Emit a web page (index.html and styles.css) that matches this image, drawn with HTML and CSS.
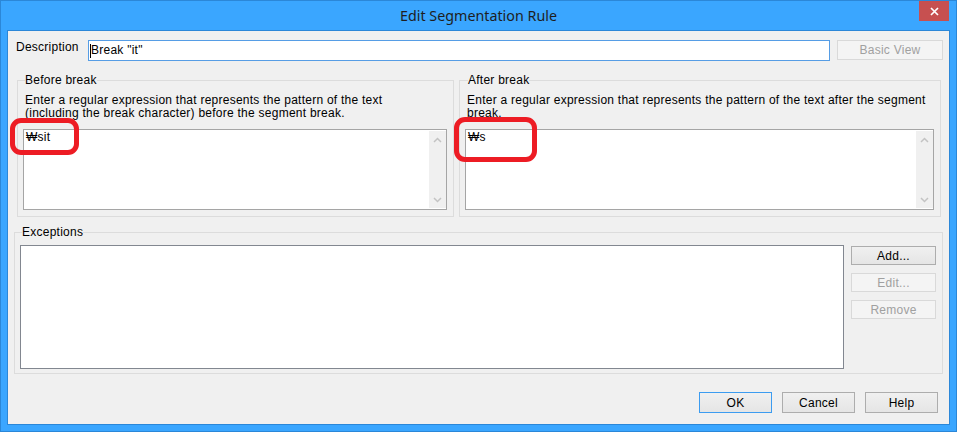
FILE: index.html
```html
<!DOCTYPE html>
<html>
<head>
<meta charset="utf-8">
<link rel="stylesheet" href="styles.css">
</head>
<body>
<div class="window">
  <div class="titlebar">
    <span class="tb-spacer"></span>
    <div class="title">Edit Segmentation Rule</div>
    <button class="close" type="button"><svg width="9" height="9" viewBox="0 0 9 9"><path d="M1 1 L8 8 M8 1 L1 8" stroke="#fff" stroke-width="1.7" fill="none"/></svg></button>
  </div>
  <div class="client">
    <div class="row-desc">
      <label class="lbl">Description</label>
      <div class="input"><span class="caret"></span>Break "it"</div>
      <button class="btn disabled basic" type="button">Basic View</button>
    </div>
    <div class="row-groups">
      <fieldset class="group g1">
        <legend>Before break</legend>
        <p class="hint">Enter a regular expression that represents the pattern of the text<br>(including the break character) before the segment break.</p>
        <div class="editbox">
          <div class="edittext">₩sit</div>
          <div class="vscroll">
            <span class="arrow"><svg width="9" height="6" viewBox="0 0 9 6"><polyline points="1,5 4.5,1.5 8,5" fill="none" stroke="#c3c3c3" stroke-width="1.5"/></svg></span>
            <span class="arrow"><svg width="9" height="6" viewBox="0 0 9 6"><polyline points="1,1 4.5,4.5 8,1" fill="none" stroke="#c3c3c3" stroke-width="1.5"/></svg></span>
          </div>
        </div>
      </fieldset>
      <fieldset class="group g2">
        <legend>After break</legend>
        <p class="hint">Enter a regular expression that represents the pattern of the text after the segment<br>break.</p>
        <div class="editbox">
          <div class="edittext">₩s</div>
          <div class="vscroll">
            <span class="arrow"><svg width="9" height="6" viewBox="0 0 9 6"><polyline points="1,5 4.5,1.5 8,5" fill="none" stroke="#c3c3c3" stroke-width="1.5"/></svg></span>
            <span class="arrow"><svg width="9" height="6" viewBox="0 0 9 6"><polyline points="1,1 4.5,4.5 8,1" fill="none" stroke="#c3c3c3" stroke-width="1.5"/></svg></span>
          </div>
        </div>
      </fieldset>
    </div>
    <fieldset class="group exceptions">
      <legend>Exceptions</legend>
      <div class="exc-body">
        <div class="listbox"></div>
        <div class="exc-buttons">
          <button class="btn side" type="button">Add...</button>
          <button class="btn side disabled" type="button">Edit...</button>
          <button class="btn side disabled" type="button">Remove</button>
        </div>
      </div>
    </fieldset>
    <div class="footer">
      <button class="btn foot default" type="button">OK</button>
      <button class="btn foot" type="button">Cancel</button>
      <button class="btn foot" type="button">Help</button>
    </div>
  </div>
  <div class="mark mark-before"></div>
  <div class="mark mark-after"></div>
</div>
</body>
</html>
```
FILE: styles.css
```css
* { box-sizing: border-box; }
html, body { margin: 0; padding: 0; background: #3aa6ff; }
body {
  font-family: "Liberation Sans", Arial, sans-serif;
  font-size: 12px;
  letter-spacing: 0.25px;
  color: #000;
}
.window {
  position: relative;
  width: 957px;
  height: 432px;
  background: #3aa6ff;
  border: 1px solid #2b87d8;
  display: flex;
  flex-direction: column;
}
.titlebar {
  height: 29px;
  display: grid;
  grid-template-columns: 1fr auto 1fr;
  padding-right: 7px;
}
.title {
  font-family: "Noto Sans", "Open Sans", sans-serif;
  font-size: 14.3px;
  letter-spacing: 0;
  color: #1e1e1e;
  line-height: 29px;
  padding-left: 7px;
}
.close {
  justify-self: end;
  align-self: start;
  width: 30px;
  height: 20px;
  border: 0;
  padding: 0;
  margin: 0;
  background: #c75050;
  display: flex;
  align-items: center;
  justify-content: center;
}
.client {
  margin: 0 6px 6px;
  border: 1px solid #2b87d8;
  background: #f0f0f0;
  height: 395px;
  display: flex;
  flex-direction: column;
}
.row-desc {
  display: flex;
  align-items: flex-start;
  margin: 9px 0 0 8px;
  height: 21px;
}
.lbl {
  width: 72px;
  line-height: 15px;
}
.input {
  width: 742px;
  height: 21px;
  border: 1px solid #569de5;
  background: #fff;
  line-height: 17px;
  padding-left: 1px;
  display: flex;
  align-items: center;
}
.caret {
  width: 1px;
  height: 14px;
  background: #000;
}
.btn {
  font-family: "Liberation Sans", Arial, sans-serif;
  font-size: 12px;
  letter-spacing: 0.25px;
  color: #000;
  border: 1px solid #adadad;
  background: linear-gradient(#f0f0f0, #e5e5e5);
  padding: 0;
  margin: 0;
  line-height: 1;
}
.btn.disabled {
  color: #a0a0a0;
  border-color: #d9d9d9;
  background: #f4f4f4;
}
.basic {
  width: 106px;
  height: 20px;
  margin-left: 7px;
}
.row-groups {
  display: flex;
  gap: 5px;
  margin: 12px 0 0 9px;
}
.group {
  margin: 0;
  border: 1px solid #dcdcdc;
  padding: 7px 6px 6px 5px;
  min-width: 0;
}
.group legend {
  padding: 0;
  margin-left: 2px;
  line-height: 14px;
}
.g1 { width: 437px; }
.g2 { width: 482px; }
.g2 legend { margin-left: 3px; }
.hint {
  margin: 0 0 0 2px;
  line-height: 13.4px;
  white-space: nowrap;
}
.editbox {
  margin-top: 8.2px;
  height: 81px;
  border: 1px solid #a5a5a5;
  background: #fff;
  display: flex;
  padding: 1px 0;
}
.edittext {
  flex: 1;
  padding: 0 0 0 2px;
  line-height: 13px;
  font-family: "Liberation Sans", "DejaVu Sans", sans-serif;
}
.vscroll {
  width: 17px;
  background: #f0f0f0;
  display: flex;
  flex-direction: column;
  justify-content: space-between;
}
.arrow {
  height: 17px;
  display: flex;
  align-items: center;
  justify-content: center;
}
.exceptions {
  width: 929px;
  margin: 8px 0 0 6px;
  padding: 6px 6px 4px 5px;
}
.exceptions legend { margin-left: 2px; }
.exc-body {
  display: flex;
  gap: 7px;
}
.listbox {
  width: 824px;
  height: 124px;
  border: 1px solid #828790;
  background: #fff;
}
.exc-buttons {
  display: flex;
  flex-direction: column;
  gap: 8px;
  padding-top: 1px;
}
.side {
  width: 85px;
  height: 19px;
}
.footer {
  display: flex;
  justify-content: flex-end;
  gap: 10px;
  margin-top: 18px;
  padding-right: 11px;
}
.foot {
  width: 73px;
  height: 21px;
}
.foot.default {
  border-color: #3c9cf0;
}
.mark {
  position: absolute;
  border: 5px solid #ed1c24;
  border-radius: 11px;
  pointer-events: none;
}
.mark-before {
  left: 9px;
  top: 117px;
  width: 69px;
  height: 37px;
}
.mark-after {
  left: 453px;
  top: 116px;
  width: 83px;
  height: 45px;
}
```
